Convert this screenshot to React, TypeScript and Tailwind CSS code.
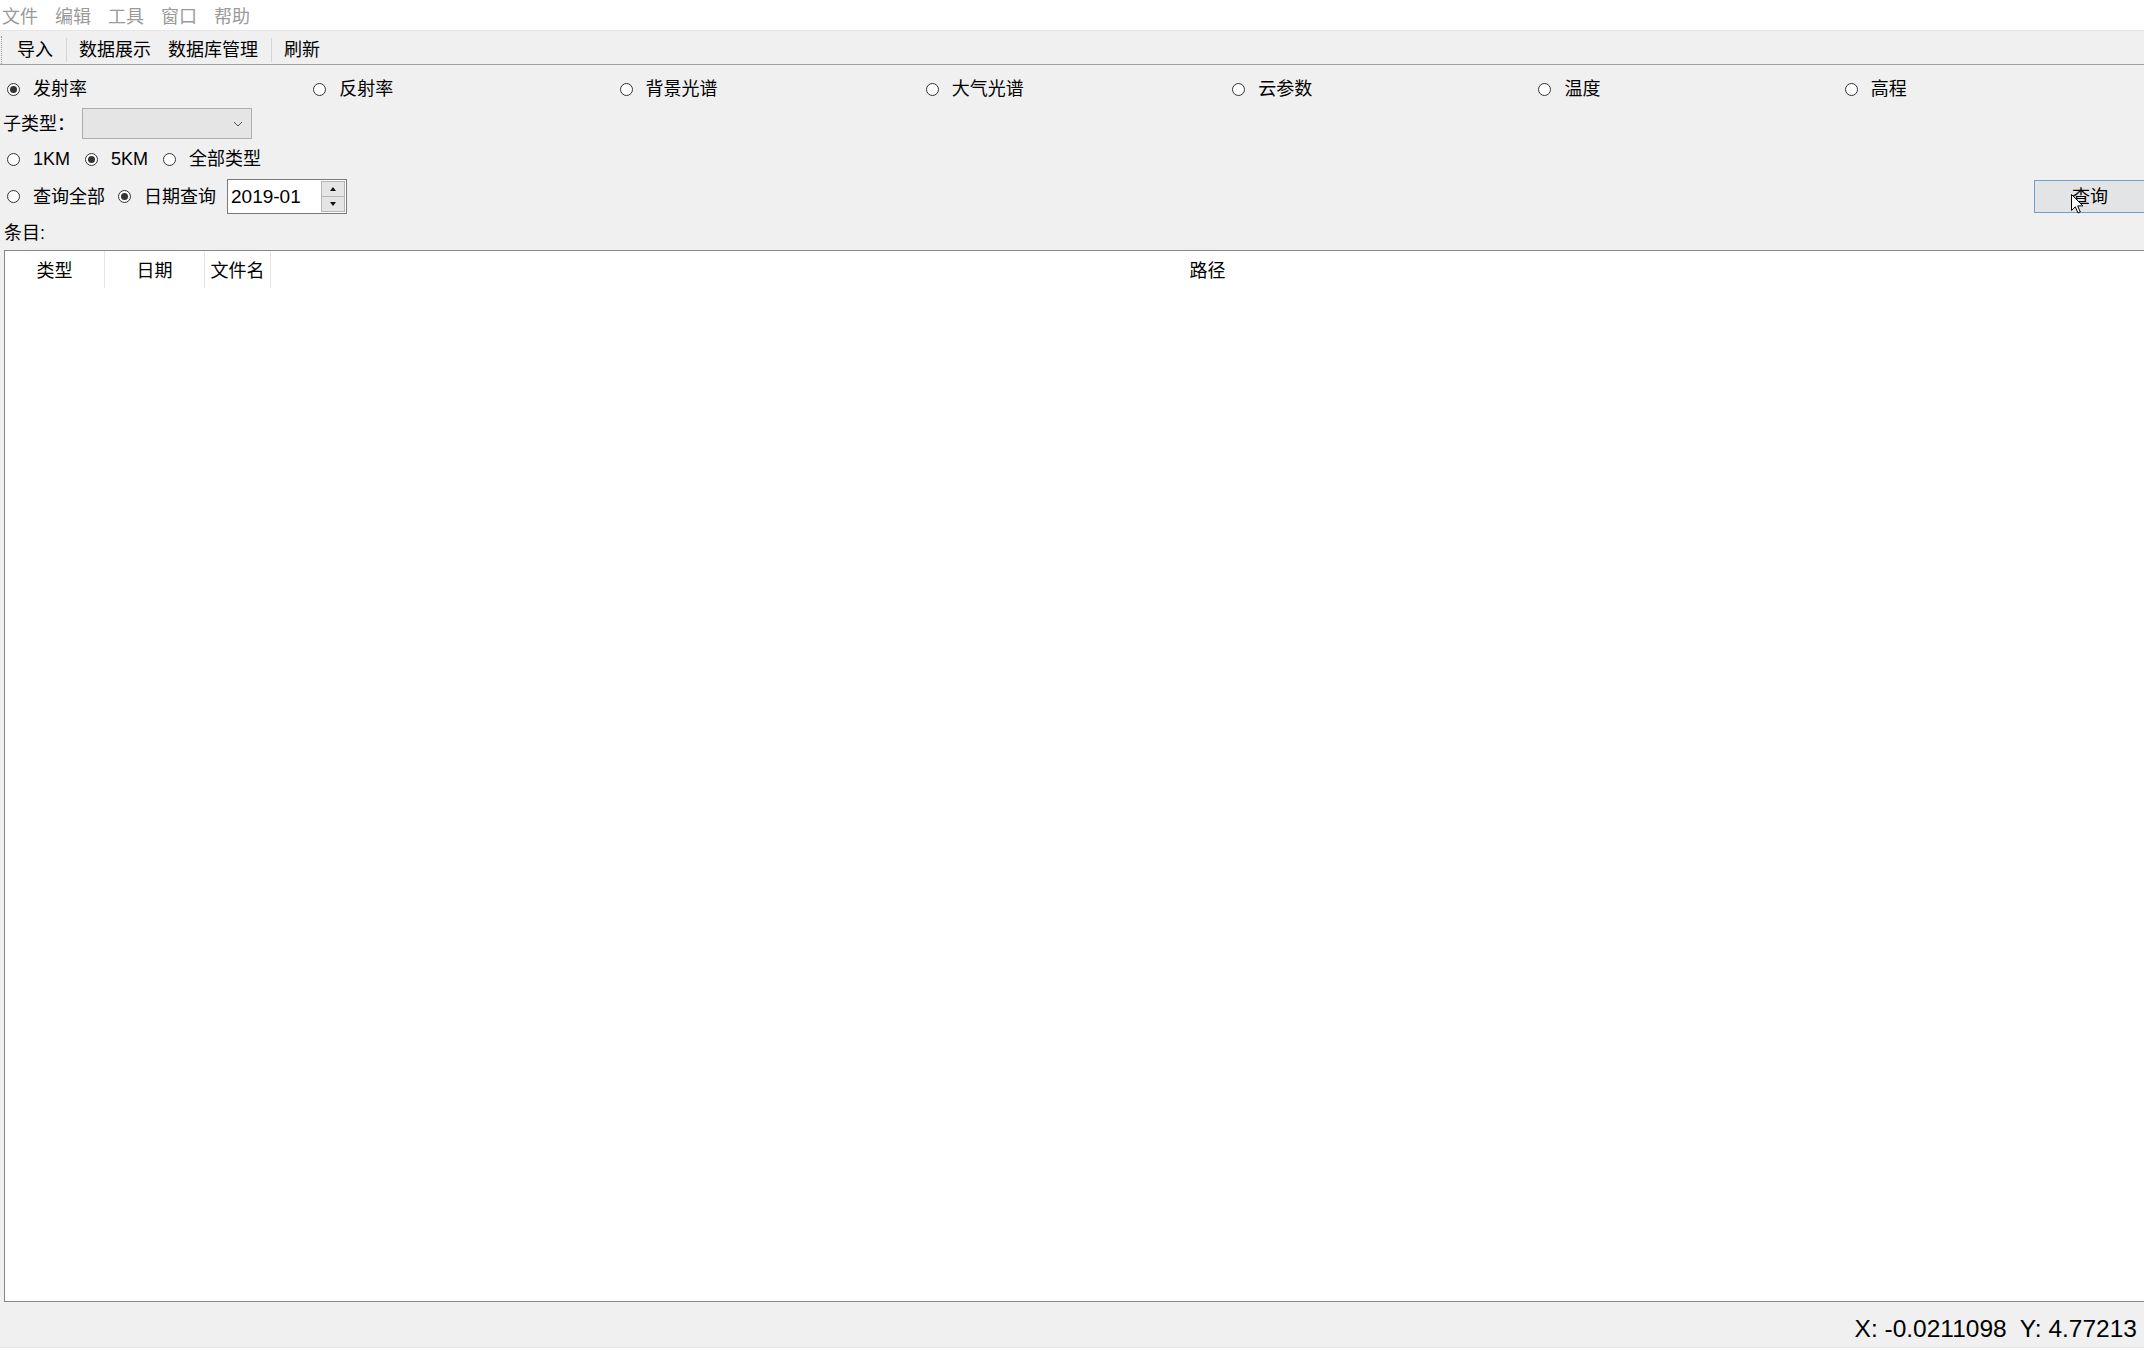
import React from 'react';

const FONT = { fontFamily: '"Liberation Sans", "Noto Sans CJK SC", sans-serif' };

const MENU_ITEMS = ['文件', '编辑', '工具', '窗口', '帮助'];

const DATA_TYPES = [
  { id: 'emission', label: '发射率', checked: true },
  { id: 'reflect', label: '反射率', checked: false },
  { id: 'background', label: '背景光谱', checked: false },
  { id: 'atmos', label: '大气光谱', checked: false },
  { id: 'cloud', label: '云参数', checked: false },
  { id: 'temp', label: '温度', checked: false },
  { id: 'elev', label: '高程', checked: false },
];

function Radio({ checked, label, className = '' }: { checked?: boolean; label: string; className?: string }) {
  return (
    <label className={`flex items-center ${className}`}>
      <span className="w-[13px] h-[13px] rounded-full border border-[#333333] bg-white flex items-center justify-center shrink-0">
        {checked && <span className="w-[7px] h-[7px] rounded-full bg-[#333333]" />}
      </span>
      <span className="ml-[13px] text-[18px] text-black leading-none whitespace-nowrap">{label}</span>
    </label>
  );
}

function App() {
  return (
    <div className="h-screen w-full flex flex-col bg-[#f0f0f0] overflow-hidden relative" style={FONT}>
      {/* Menu bar */}
      <div className="h-[31px] shrink-0 bg-white border-b border-[#e6e6e6] flex items-center pt-[4px]">
        {MENU_ITEMS.map((m, i) => (
          <span key={m} className={`text-[18px] text-[#9a9a9a] leading-none ${i === 0 ? 'ml-[2px]' : 'ml-[17px]'}`}>
            {m}
          </span>
        ))}
      </div>

      {/* Toolbar */}
      <div className="h-[34px] shrink-0 border-b border-[#a0a0a0] flex items-center pt-[4px]">
        <div className="ml-[1px] h-[28px] border-l border-dotted border-[#9a9a9a]" />
        <span className="ml-[15px] text-[18px] leading-none">导入</span>
        <div className="ml-[13px] w-px h-[24px] bg-[#d5d5d5]" />
        <span className="ml-[12px] text-[18px] leading-none">数据展示</span>
        <span className="ml-[17px] text-[18px] leading-none">数据库管理</span>
        <div className="ml-[13px] w-px h-[24px] bg-[#d5d5d5]" />
        <span className="ml-[12px] text-[18px] leading-none">刷新</span>
      </div>

      {/* Data type radios */}
      <div className="mt-[3px] h-[41px] shrink-0 grid grid-cols-7 items-center pt-[1px]">
        {DATA_TYPES.map((t) => (
          <Radio key={t.id} checked={t.checked} label={t.label} className="pl-[7px]" />
        ))}
      </div>

      {/* Sub type */}
      <div className="-mt-[1px] h-[31px] shrink-0 flex items-center">
        <span className="ml-[3px] text-[18px] leading-none">子类型：</span>
        <div className="ml-[7px] w-[170px] h-[31px] bg-[#e5e5e5] border border-[#adadad] flex items-center justify-end pr-[8px]">
          <svg width="10" height="6" viewBox="0 0 10 6" fill="none">
            <path d="M1 1l4 4 4-4" stroke="#555" strokeWidth="1" />
          </svg>
        </div>
      </div>

      {/* Resolution */}
      <div className="mt-[5px] h-[30px] shrink-0 flex items-center">
        <Radio label="1KM" className="ml-[7px]" />
        <Radio checked label="5KM" className="ml-[15px]" />
        <Radio label="全部类型" className="ml-[15px]" />
      </div>

      {/* Query mode */}
      <div className="mt-[5px] h-[35px] shrink-0 flex items-center">
        <Radio label="查询全部" className="ml-[7px]" />
        <Radio checked label="日期查询" className="ml-[13px]" />
        <div className="ml-[11px] w-[120px] h-[35px] bg-white border border-[#7a7a7a] flex items-center">
          <span className="ml-[3px] text-[19px] leading-none">2019-01</span>
          <div className="ml-auto mr-[1px] w-[24px] h-[31px] flex flex-col">
            <div className="flex-1 bg-[#e5e5e5] border border-[#b5b5b5] flex items-center justify-center">
              <svg width="6" height="4" viewBox="0 0 6 4"><path d="M0 4L3 0L6 4Z" fill="#111" /></svg>
            </div>
            <div className="flex-1 bg-[#e5e5e5] border border-t-0 border-[#b5b5b5] flex items-center justify-center">
              <svg width="6" height="4" viewBox="0 0 6 4"><path d="M0 0L6 0L3 4Z" fill="#111" /></svg>
            </div>
          </div>
        </div>
        <button className="ml-auto w-[110px] h-[33px] bg-[#e3e4e6] border border-r-0 border-[#6d9fd3] text-[18px] leading-none flex items-center justify-center pl-[1px]">
          查询
        </button>
      </div>

      {/* Entries label */}
      <div className="mt-[7px] h-[24px] shrink-0 flex items-center">
        <span className="ml-[4px] text-[18px] leading-none">条目:</span>
      </div>

      {/* Table */}
      <div className="mt-[5px] ml-[4px] flex-1 bg-white border-l border-t border-b border-[#828790] flex flex-col min-h-0">
        <div className="h-[37px] shrink-0 flex text-[18px] leading-none">
          <div className="w-[100px] border-r border-[#e5e5e5] flex items-center justify-center pt-[2px]">类型</div>
          <div className="w-[100px] border-r border-[#e5e5e5] flex items-center justify-center pt-[2px]">日期</div>
          <div className="w-[66px] border-r border-[#e5e5e5] flex items-center justify-center pt-[2px]">文件名</div>
          <div className="flex-1 flex items-center justify-center pt-[2px]">路径</div>
        </div>
      </div>

      {/* Status bar */}
      <div className="h-[46px] shrink-0 flex items-center justify-end pr-[7px] pt-[9px] border-b border-[#e4e4e8]">
        <span className="text-[24.5px] leading-none whitespace-pre">X: -0.0211098  Y: 4.77213</span>
      </div>

      {/* Mouse cursor over the query button */}
      <svg className="absolute left-[2071px] top-[194px]" width="13" height="20" viewBox="0 0 13 20">
        <path d="M0.5 0.5L0.5 16.5L4.3 12.8L7 19L9.3 18L6.7 11.9L12 11.9Z" fill="white" stroke="black" strokeWidth="1" strokeLinejoin="miter" />
      </svg>
    </div>
  );
}

export default App;
